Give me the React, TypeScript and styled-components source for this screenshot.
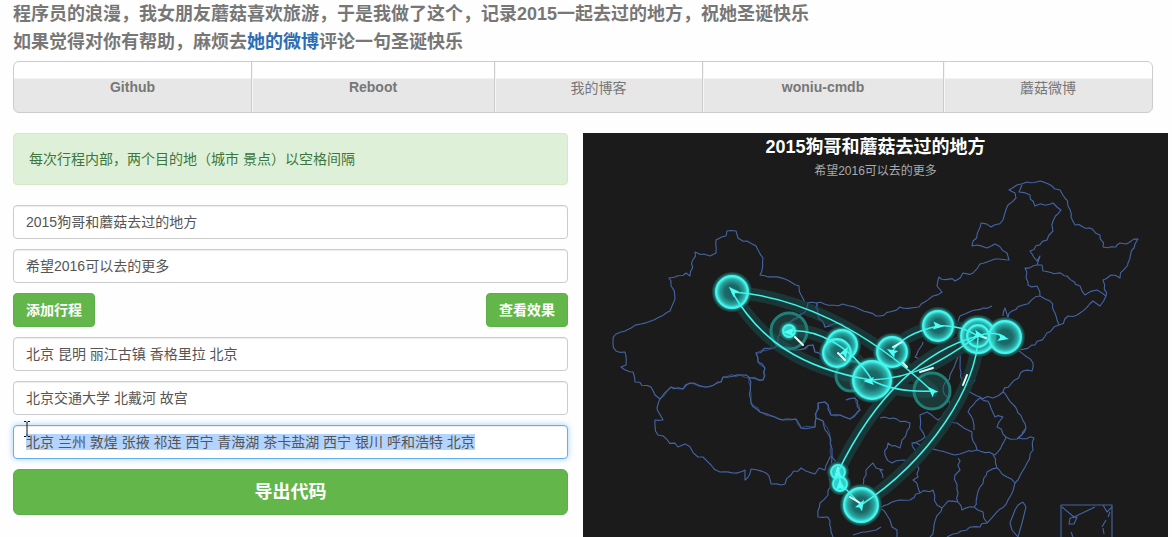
import React from 'react';
import styled, { createGlobalStyle } from 'styled-components';

const Global = createGlobalStyle`
  html, body { margin: 0; padding: 0; background: #fefefe; overflow: hidden; }
  body { font-family: "Liberation Sans", "Noto Sans CJK SC", sans-serif; font-size: 14px; color: #555; }
`;

const Page = styled.div`
  width: 1172px;
  height: 537px;
  overflow: hidden;
  padding-left: 13px;
  box-sizing: border-box;
`;
const Intro = styled.p`
  margin: 0 0 5px;
  font-size: 18px;
  line-height: 28px;
  font-weight: 700;
  color: #777;
`;
const Link = styled.a`
  color: #2a6db5;
  text-decoration: none;
`;
const Nav = styled.nav`
  display: flex;
  width: 1140px;
  height: 52px;
  box-sizing: border-box;
  border: 1px solid #ccc;
  border-radius: 6px;
  overflow: hidden;
  background: linear-gradient(#fff 16px, #e7e7e7 17px);
  margin-bottom: 20px;
`;
const NavItem = styled.div<{ $w: number }>`
  width: ${p => p.$w}px;
  flex: none;
  box-sizing: border-box;
  display: flex;
  align-items: center;
  justify-content: center;
  border-left: 1px solid #ccc;
  box-shadow: inset 1px 0 0 #f6f6f6;
  font-size: 14px;
  font-weight: 700;
  color: #777;
  &:first-child { border-left: 0; box-shadow: none; }
`;
const NavCjk = styled(NavItem)`
  font-weight: 400;
`;
const Columns = styled.div`
  display: flex;
  gap: 15px;
  align-items: flex-start;
`;
const Form = styled.div`
  width: 555px;
  flex: none;
  display: flex;
  flex-direction: column;
  gap: 10px;
`;
const Alert = styled.div`
  box-sizing: border-box;
  height: 52px;
  padding: 15px;
  line-height: 20px;
  background: #dff0d8;
  border: 1px solid #d6e9c6;
  border-radius: 4px;
  color: #3c763d;
  margin-bottom: 10px;
`;
const Field = styled.input`
  box-sizing: border-box;
  display: block;
  width: 100%;
  height: 34px;
  padding: 5px 12px 7px;
  border: 1px solid #ccc;
  border-radius: 4px;
  background: #fff;
  box-shadow: inset 0 1px 1px rgba(0, 0, 0, .075);
  font: inherit;
  line-height: 20px;
  color: #555;
  outline: none;
`;
const FocusedField = styled.div`
  position: relative;
  box-sizing: border-box;
  height: 34px;
  padding: 6px 12px;
  border: 1px solid #66afe9;
  border-radius: 4px;
  background: #fff;
  box-shadow: inset 0 1px 1px rgba(0, 0, 0, .075), 0 0 6px rgba(102, 175, 233, .6);
  line-height: 20px;
  color: #555;
`;
const Selected = styled.span`
  background: #b3d4fc;
`;
const Caret = styled.svg`
  position: absolute;
  left: 9px;
  top: -5px;
`;
const Actions = styled.div`
  display: flex;
  justify-content: space-between;
`;
const Button = styled.button`
  box-sizing: border-box;
  height: 34px;
  width: 82px;
  padding: 0 0 2px;
  border: 1px solid #5cb04a;
  border-radius: 4px;
  background: #63b64a;
  color: #fff;
  font: inherit;
  font-weight: 700;
`;
const BigButton = styled(Button)`
  width: 100%;
  height: 46px;
  padding-bottom: 4px;
  border-radius: 6px;
  font-size: 18px;
`;
const Chart = styled.div`
  position: relative;
  width: 585px;
  height: 404px;
  flex: none;
  background: #1b1b1b;
  overflow: hidden;
`;
const ChartHead = styled.div`
  position: absolute;
  top: 3px;
  left: 0;
  right: 0;
  text-align: center;
`;
const ChartTitle = styled.div`
  font-size: 18px;
  line-height: 23px;
  font-weight: 700;
  color: #fff;
`;
const ChartSub = styled.div`
  margin-top: 5px;
  font-size: 12px;
  line-height: 15px;
  color: #aaa;
`;
const MapSvg = styled.svg`
  display: block;
`;
const Border = styled.polyline`
  fill: none;
  stroke: #4465a8;
  stroke-width: 1.1;
  stroke-linejoin: round;
`;
const Trail = styled.path`
  fill: none;
  stroke: #1a3a39;
  stroke-width: 13;
  stroke-linecap: round;
`;
const Route = styled.path`
  fill: none;
  stroke: #3ff5ec;
  stroke-width: 1.5;
`;
const Glint = styled.line`
  stroke: #e6fffb;
  stroke-width: 2;
  stroke-linecap: round;
`;

const COMMA = '\uFF0C';
const LP = '\uFF08';
const RP = '\uFF09';

const P = (s: string) => s.trim().split(/\s+/).map(p => p.split(',').map(Number));
let seed = 7;
const rnd = () => { seed = (seed * 16807) % 2147483647; return seed / 2147483647 - 0.5; };
const rough = (s: string) => {
  const pts = P(s);
  const out: string[] = [];
  pts.forEach((p, i) => {
    out.push(`${p[0]},${p[1]}`);
    const q = pts[i + 1];
    if (!q) return;
    const d = Math.hypot(q[0] - p[0], q[1] - p[1]);
    const n = Math.floor(d / 4);
    for (let k = 1; k < n; k++) {
      const t = k / n;
      out.push(`${(p[0] + (q[0] - p[0]) * t + rnd() * 3).toFixed(1)},${(p[1] + (q[1] - p[1]) * t + rnd() * 3).toFixed(1)}`);
    }
  });
  return out.join(' ');
};

const borders = [
  '621,332 631,328 641,324 651,321 670,311 675,299 671,281 669,278 686,273 690,276 695,252 710,256 716,253 716,240 726,236 727,231 736,231 738,238 756,246 763,258 760,275 785,279 799,286 805,303 816,303 846,305 876,316 880,316 900,307 919,307 933,296 942,292 937,286 939,277 955,281 963,273 973,273 980,264 995,259 1009,260 1007,253 995,244 987,248 977,245 972,246 973,241 981,223 991,227 1003,220 1008,205 1016,198 1015,193 1009,190 1017,185 1040,181 1052,186 1060,190 1068,206 1075,225 1090,228 1100,235 1103,247 1116,247 1117,245 1138,239 1134,248 1128,263 1120,278 1111,275 1103,280 1106,296 1100,306 1093,301 1080,313 1068,316 1059,325 1047,333 1035,345 1018,350 1033,363 1032,371 1023,371 1003,392 1017,410 1026,428 1018,438 1034,438 1033,450 1027,463 1015,483 1008,500 987,523 958,533 947,537',
  '621,332 616,334 613,343 616,351 625,352 626,365 621,367 633,372 635,382 651,387 655,395 660,399 657,408 663,420 655,420 658,435 678,447 685,444 698,457 703,457 711,465 720,472 733,473 745,470 745,480 751,469 766,473 771,484 785,484 791,475 801,468 815,474 819,468 825,470 830,457 832,457 828,495 820,503 818,517 828,517 833,537',
  '660,399 671,387 683,389 690,383 705,387 721,382 723,377 740,375 750,378 763,380 765,368 758,362 756,353 778,345 778,337 783,327 790,322 805,312 808,303',
  '749,378 751,403 760,412 783,420 796,419 801,428 815,427 816,418 823,421 830,437 832,457',
  '816,418 818,403 825,402 831,415 840,415 850,419 860,410 855,398 846,400',
  '778,345 797,350 813,345 815,352 828,356',
  '817,303 818,315 825,327 838,323 850,328',
  '1022,185 1019,192 1030,195 1035,206 1053,203 1061,210 1053,221 1053,231 1047,240 1030,251 1037,261 1040,256 1037,265 1025,268 1028,285 1037,286 1040,296 1050,301 1057,320 1059,325',
  '1037,265 1042,265 1043,271 1067,276 1080,286 1085,295 1097,290 1106,296',
  '1040,296 1023,305 1012,311 1008,318 1005,308 1003,316',
  '992,306 983,308 967,313 960,316 957,326',
  '965,390 980,397 993,398 1003,392',
  '980,398 990,405 995,417 1003,417 997,427 1006,437 1017,439 1026,428',
  '980,398 968,412 973,420 974,430',
  '938,420 957,423 972,432 977,450 995,455 1006,437',
  '993,455 997,468 1007,477 1015,483',
  '913,443 928,447 955,455 977,450',
  '958,458 960,470 955,475 958,493 958,502 962,510 974,507 983,512 987,523',
  '997,468 987,472 980,487 974,507',
  '880,508 900,500 910,500 920,493 933,490 937,505 942,508 948,501 958,502',
  '920,493 913,480 918,477 918,460 912,443 925,437 920,428 920,415 927,412 938,420',
  '880,418 893,418 910,423 900,448 888,443 885,455 892,463 903,460 913,463',
  '923,342 915,357 922,360 935,352',
  '958,357 950,375 943,390 950,405 938,420',
  '965,387 975,380 962,380 960,355 957,343 964,330',
  '942,508 934,525 930,537',
  '880,508 890,520 892,527 897,530 897,537',
  '853,535 866,532 876,530 881,527',
  '863,487 866,470 873,463 876,468 883,470 880,470 883,478',
  '832,457 840,470 846,487',
];
const boxes = [
  '1023,502 1026,507 1022,523 1018,537 1012,530 1010,523 1015,510 1018,505 1023,502',
  '1061,537 1061,505 1112,505 1112,537',
  '1062,507 1074,517 1095,507',
  '1103,505 1107,512 1112,507',
  '1070,518 1077,517 1074,524 1069,524 1070,518',
  '1103,528 1104,534',
  '1106,520 1102,527',
  '1110,512 1108,517',
  '1071,532 1073,537',
];
const routes = [
  'M732 292 C795 296 865 328 932 391',
  'M732 292 C760 340 800 368 871 380',
  'M789 331 C815 328 850 345 872 380',
  'M892 352 C900 338 920 330 938 326',
  'M938 326 C950 325 965 328 978 336',
  'M978 336 Q992 330 1005 337',
  'M978 336 C950 355 920 378 872 380',
  'M978 336 C925 350 875 395 838 472',
  'M978 336 C978 385 930 460 861 505',
  'M838 472 L841 484 L861 505',
  'M871 380 C890 390 910 392 932 391',
];
const glints = [
  [795, 337, 803, 345], [838, 353, 845, 360], [893, 347, 902, 342], [920, 372, 933, 368],
  [903, 363, 907, 367], [967, 375, 963, 385], [977, 335, 986, 338], [850, 497, 860, 503], [838, 468, 836, 476],
];
const nodes = [
  { x: 732, y: 292, r: 16 }, { x: 789, y: 331, r: 6 }, { x: 842, y: 345, r: 15 }, { x: 837, y: 353, r: 14 },
  { x: 892, y: 352, r: 15 }, { x: 872, y: 380, r: 19 }, { x: 938, y: 326, r: 15 }, { x: 978, y: 336, r: 17 },
  { x: 978, y: 336, r: 11 }, { x: 1005, y: 337, r: 16 }, { x: 838, y: 472, r: 7 }, { x: 840, y: 484, r: 7 }, { x: 861, y: 505, r: 17 },
];
const rings = [{ x: 789, y: 331, r: 18 }, { x: 932, y: 391, r: 18 }, { x: 851, y: 376, r: 15 }];
const arrows = [
  { x: 733, y: 291, a: -135 }, { x: 789, y: 332, a: 180 }, { x: 845, y: 352, a: -60 }, { x: 892, y: 352, a: -150 },
  { x: 869, y: 381, a: 180 }, { x: 938, y: 326, a: 5 }, { x: 979, y: 335, a: 15 }, { x: 1003, y: 338, a: 10 },
  { x: 838, y: 473, a: -90 }, { x: 840, y: 485, a: -90 }, { x: 861, y: 505, a: -60 }, { x: 932, y: 391, a: -135 },
];

const ChinaMap = () => (
  <MapSvg width="585" height="404" viewBox="583 133 585 404">
    <defs>
      <radialGradient id="nodeFill">
        <stop offset="0" stopColor="#1a6463" stopOpacity=".95" />
        <stop offset=".45" stopColor="#1c7573" stopOpacity=".8" />
        <stop offset=".8" stopColor="#2bbdb6" stopOpacity=".85" />
        <stop offset="1" stopColor="#49f5ec" />
      </radialGradient>
      <filter id="soft" x="-30%" y="-30%" width="160%" height="160%">
        <feGaussianBlur stdDeviation="1.2" />
      </filter>
    </defs>
    {borders.map((b, i) => <Border key={i} points={rough(b)} />)}
    {boxes.map((b, i) => <Border key={i} points={b} />)}
    {routes.map((d, i) => <Trail key={i} d={d} opacity=".92" />)}
    {nodes.map((n, i) => <circle key={i} cx={n.x} cy={n.y} r={n.r + 4} fill="#1a3a39" />)}
    {borders.slice(2, 7).map((b, i) => <Border key={i} points={rough(b)} opacity=".6" />)}
    {rings.map((n, i) => (
      <circle key={i} cx={n.x} cy={n.y} r={n.r} fill="#1f5f5b" fillOpacity=".45" stroke="#1f8078" strokeWidth="3" />
    ))}
    {nodes.map((n, i) => (
      <circle key={i} cx={n.x} cy={n.y} r={n.r} fill="none" stroke="#3ff5ec" strokeWidth="3.5" opacity=".65" filter="url(#soft)" />
    ))}
    {nodes.map((n, i) => (
      <circle key={i} cx={n.x} cy={n.y} r={n.r} fill={n.r < 8 ? '#2fd0c9' : 'url(#nodeFill)'} stroke="#45f7ee" strokeWidth="1.8" />
    ))}
    {routes.map((d, i) => <Route key={i} d={d} />)}
    {glints.map((g, i) => <Glint key={i} x1={g[0]} y1={g[1]} x2={g[2]} y2={g[3]} />)}
    {arrows.map((a, i) => (
      <polygon key={i} points="-5,-4 6,0 -5,4 -3,0" transform={`translate(${a.x} ${a.y}) rotate(${a.a})`} fill="#4dfff4" />
    ))}
  </MapSvg>
);

export default function App() {
  return (
    <Page>
      <Global />
      <Intro>
        {`程序员的浪漫${COMMA}我女朋友蘑菇喜欢旅游${COMMA}于是我做了这个${COMMA}记录2015一起去过的地方${COMMA}祝她圣诞快乐`}
        <br />
        {`如果觉得对你有帮助${COMMA}麻烦去`}<Link href="#">她的微博</Link>评论一句圣诞快乐
      </Intro>
      <Nav>
        <NavItem $w={237}>Github</NavItem>
        <NavItem $w={243}>Reboot</NavItem>
        <NavCjk $w={208}>我的博客</NavCjk>
        <NavItem $w={241}>woniu-cmdb</NavItem>
        <NavCjk $w={209}>蘑菇微博</NavCjk>
      </Nav>
      <Columns>
        <Form>
          <Alert>{`每次行程内部${COMMA}两个目的地${LP}城市 景点${RP}以空格间隔`}</Alert>
          <Field readOnly value="2015狗哥和蘑菇去过的地方" />
          <Field readOnly value="希望2016可以去的更多" />
          <Actions>
            <Button>添加行程</Button>
            <Button>查看效果</Button>
          </Actions>
          <Field readOnly value="北京 昆明 丽江古镇 香格里拉 北京" />
          <Field readOnly value="北京交通大学 北戴河 故宫" />
          <FocusedField>
            <Selected>北京 兰州 敦煌 张掖 祁连 西宁 青海湖 茶卡盐湖 西宁 银川 呼和浩特 北京</Selected>
            <Caret width="8" height="16" viewBox="0 0 8 16">
              <path d="M1 .5h2l1 1 1-1h2M4 1.5v13M1 15.5h2l1-1 1 1h2" fill="none" stroke="#111" strokeWidth="1" />
            </Caret>
          </FocusedField>
          <BigButton>导出代码</BigButton>
        </Form>
        <Chart>
          <ChinaMap />
          <ChartHead>
            <ChartTitle>2015狗哥和蘑菇去过的地方</ChartTitle>
            <ChartSub>希望2016可以去的更多</ChartSub>
          </ChartHead>
        </Chart>
      </Columns>
    </Page>
  );
}
